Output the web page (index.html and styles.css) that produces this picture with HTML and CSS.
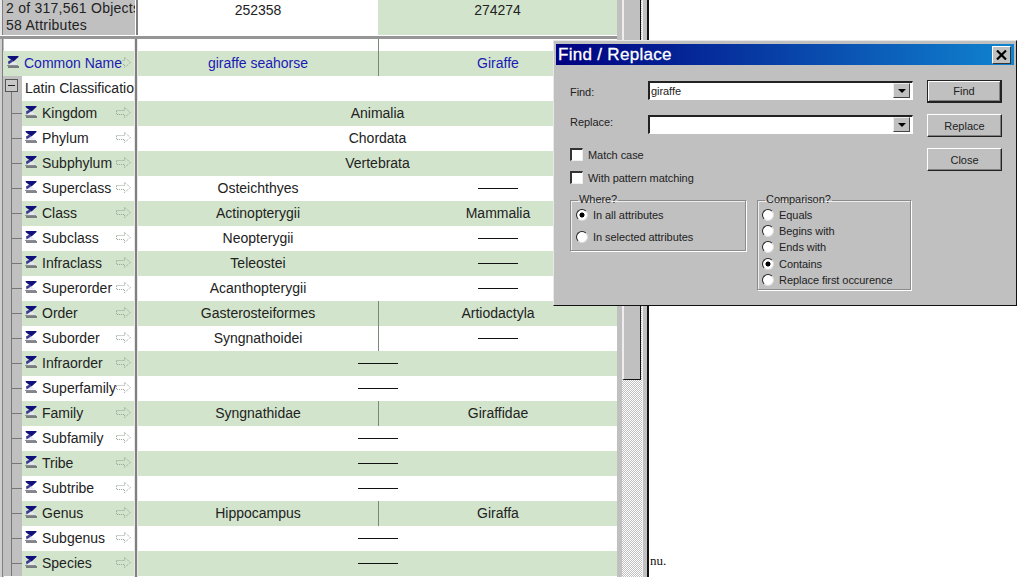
FILE: index.html
```html
<!DOCTYPE html>
<html lang="en">
<head>
<meta charset="utf-8">
<title>Find / Replace</title>
<link rel="stylesheet" href="styles.css">
</head>
<body>
<svg class="defs" width="0" height="0" aria-hidden="true">
  <symbol id="sum" viewBox="0 0 12 12">
    <path d="M0.5 0H11.5V1L6.5 5.5L1 1.5Z" fill="#10107a"/>
    <path d="M5 5.5L1 8.5H11L7.5 6.5Z" fill="#e8e8f4"/>
    <path d="M1 5.5L4.5 3.5L6 5.5L1.5 8.5Z" fill="#3a3a90"/>
    <path d="M0 9.5H11" stroke="#8c8c98" stroke-width="1"/>
    <path d="M1 11H12" stroke="#50505a" stroke-width="1.4"/>
  </symbol>
  <symbol id="arrow" viewBox="0 0 17 13">
    <path d="M1.5 4.5H9.5V1.5L15.5 6.5L9.5 11.5V8.5H1.5Z" fill="none" stroke="#97a397" stroke-width="1" stroke-dasharray="1 1"/>
  </symbol>
</svg>

<main class="app">
  <div class="pane">
    <header class="head">
      <div class="head-info">2 of 317,561 Objects<br>58 Attributes</div>
      <div class="head-split"></div>
      <div class="head-cols"><div class="hc">252358</div><div class="hc hc-g">274274</div></div>
    </header>
    <div class="gap"></div>

    <div class="row r-top"><div class="lab"></div><div class="split"></div><div class="vals"><div class="v v-l"></div><div class="v"></div></div></div>

    <div class="row g"><div class="lab lab-root"><svg class="sum"><use href="#sum"/></svg><div class="stack"><svg class="arr"><use href="#arrow"/></svg><span class="name link">Common Name</span></div></div><div class="split"></div><div class="vals"><div class="v v-l link">giraffe seahorse</div><div class="v link">Giraffe</div></div></div>

    <div class="row"><div class="lab"><div class="gut gut-min"><span class="minus"></span></div><span class="name name-latin">Latin Classification</span></div><div class="split"></div><div class="vals"></div></div>

    <div class="row g"><div class="lab"><div class="gut"></div><svg class="sum"><use href="#sum"/></svg><div class="stack"><svg class="arr"><use href="#arrow"/></svg><span class="name">Kingdom</span></div></div><div class="split"></div><div class="vals"><div class="v">Animalia</div></div></div>
    <div class="row"><div class="lab"><div class="gut"></div><svg class="sum"><use href="#sum"/></svg><div class="stack"><svg class="arr"><use href="#arrow"/></svg><span class="name">Phylum</span></div></div><div class="split"></div><div class="vals"><div class="v">Chordata</div></div></div>
    <div class="row g"><div class="lab"><div class="gut"></div><svg class="sum"><use href="#sum"/></svg><div class="stack"><svg class="arr"><use href="#arrow"/></svg><span class="name">Subphylum</span></div></div><div class="split"></div><div class="vals"><div class="v">Vertebrata</div></div></div>
    <div class="row"><div class="lab"><div class="gut"></div><svg class="sum"><use href="#sum"/></svg><div class="stack"><svg class="arr"><use href="#arrow"/></svg><span class="name">Superclass</span></div></div><div class="split"></div><div class="vals"><div class="v v-n">Osteichthyes</div><div class="v"><i class="dash"></i></div></div></div>
    <div class="row g"><div class="lab"><div class="gut"></div><svg class="sum"><use href="#sum"/></svg><div class="stack"><svg class="arr"><use href="#arrow"/></svg><span class="name">Class</span></div></div><div class="split"></div><div class="vals"><div class="v v-n">Actinopterygii</div><div class="v">Mammalia</div></div></div>
    <div class="row"><div class="lab"><div class="gut"></div><svg class="sum"><use href="#sum"/></svg><div class="stack"><svg class="arr"><use href="#arrow"/></svg><span class="name">Subclass</span></div></div><div class="split"></div><div class="vals"><div class="v v-n">Neopterygii</div><div class="v"><i class="dash"></i></div></div></div>
    <div class="row g"><div class="lab"><div class="gut"></div><svg class="sum"><use href="#sum"/></svg><div class="stack"><svg class="arr"><use href="#arrow"/></svg><span class="name">Infraclass</span></div></div><div class="split"></div><div class="vals"><div class="v v-n">Teleostei</div><div class="v"><i class="dash"></i></div></div></div>
    <div class="row"><div class="lab"><div class="gut"></div><svg class="sum"><use href="#sum"/></svg><div class="stack"><svg class="arr"><use href="#arrow"/></svg><span class="name">Superorder</span></div></div><div class="split"></div><div class="vals"><div class="v v-n">Acanthopterygii</div><div class="v"><i class="dash"></i></div></div></div>
    <div class="row g"><div class="lab"><div class="gut"></div><svg class="sum"><use href="#sum"/></svg><div class="stack"><svg class="arr"><use href="#arrow"/></svg><span class="name">Order</span></div></div><div class="split"></div><div class="vals"><div class="v v-l">Gasterosteiformes</div><div class="v">Artiodactyla</div></div></div>
    <div class="row"><div class="lab"><div class="gut"></div><svg class="sum"><use href="#sum"/></svg><div class="stack"><svg class="arr"><use href="#arrow"/></svg><span class="name">Suborder</span></div></div><div class="split"></div><div class="vals"><div class="v v-l">Syngnathoidei</div><div class="v"><i class="dash"></i></div></div></div>
    <div class="row g"><div class="lab"><div class="gut"></div><svg class="sum"><use href="#sum"/></svg><div class="stack"><svg class="arr"><use href="#arrow"/></svg><span class="name">Infraorder</span></div></div><div class="split"></div><div class="vals"><div class="v"><i class="dash"></i></div></div></div>
    <div class="row"><div class="lab"><div class="gut"></div><svg class="sum"><use href="#sum"/></svg><div class="stack"><svg class="arr"><use href="#arrow"/></svg><span class="name">Superfamily</span></div></div><div class="split"></div><div class="vals"><div class="v"><i class="dash"></i></div></div></div>
    <div class="row g"><div class="lab"><div class="gut"></div><svg class="sum"><use href="#sum"/></svg><div class="stack"><svg class="arr"><use href="#arrow"/></svg><span class="name">Family</span></div></div><div class="split"></div><div class="vals"><div class="v v-l">Syngnathidae</div><div class="v">Giraffidae</div></div></div>
    <div class="row"><div class="lab"><div class="gut"></div><svg class="sum"><use href="#sum"/></svg><div class="stack"><svg class="arr"><use href="#arrow"/></svg><span class="name">Subfamily</span></div></div><div class="split"></div><div class="vals"><div class="v"><i class="dash"></i></div></div></div>
    <div class="row g"><div class="lab"><div class="gut"></div><svg class="sum"><use href="#sum"/></svg><div class="stack"><svg class="arr"><use href="#arrow"/></svg><span class="name">Tribe</span></div></div><div class="split"></div><div class="vals"><div class="v"><i class="dash"></i></div></div></div>
    <div class="row"><div class="lab"><div class="gut"></div><svg class="sum"><use href="#sum"/></svg><div class="stack"><svg class="arr"><use href="#arrow"/></svg><span class="name">Subtribe</span></div></div><div class="split"></div><div class="vals"><div class="v"><i class="dash"></i></div></div></div>
    <div class="row g"><div class="lab"><div class="gut"></div><svg class="sum"><use href="#sum"/></svg><div class="stack"><svg class="arr"><use href="#arrow"/></svg><span class="name">Genus</span></div></div><div class="split"></div><div class="vals"><div class="v v-l">Hippocampus</div><div class="v">Giraffa</div></div></div>
    <div class="row"><div class="lab"><div class="gut"></div><svg class="sum"><use href="#sum"/></svg><div class="stack"><svg class="arr"><use href="#arrow"/></svg><span class="name">Subgenus</span></div></div><div class="split"></div><div class="vals"><div class="v"><i class="dash"></i></div></div></div>
    <div class="row g"><div class="lab"><div class="gut"></div><svg class="sum"><use href="#sum"/></svg><div class="stack"><svg class="arr"><use href="#arrow"/></svg><span class="name">Species</span></div></div><div class="split"></div><div class="vals"><div class="v"><i class="dash"></i></div></div></div>
    <div class="row"><div class="lab"></div><div class="split"></div><div class="vals"></div></div>
  </div>

  <div class="vscroll">
    <div class="vs-gutter"></div>
    <div class="vs-track"><div class="vs-thumb"></div></div>
  </div>
</main>
<p class="stray">nu.</p>

<section class="dialog" aria-label="Find / Replace">
  <div class="titlebar">
    <span class="title">Find / Replace</span>
    <button class="x" type="button" aria-label="Close"><svg width="11" height="10" viewBox="0 0 11 10"><path d="M1 0.5L10 9.5M10 0.5L1 9.5" stroke="#000" stroke-width="2.2"/></svg></button>
  </div>
  <div class="dlg-body">
    <div class="form">
      <div class="field"><span>Find:</span><div class="combo"><span class="combo-val">giraffe</span><span class="drop"></span></div></div>
      <div class="field f2"><span>Replace:</span><div class="combo"><span class="combo-val"></span><span class="drop"></span></div></div>
      <label class="chk c1"><input type="checkbox"><span>Match case</span></label>
      <label class="chk c2"><input type="checkbox"><span>With pattern matching</span></label>
      <div class="groups">
        <fieldset class="grp grp-where">
          <legend>Where?</legend>
          <label class="rad"><input type="radio" name="w" checked><span>In all attributes</span></label>
          <label class="rad rad-far"><input type="radio" name="w"><span>In selected attributes</span></label>
        </fieldset>
        <fieldset class="grp grp-cmp">
          <legend>Comparison?</legend>
          <label class="rad"><input type="radio" name="c"><span>Equals</span></label>
          <label class="rad"><input type="radio" name="c"><span>Begins with</span></label>
          <label class="rad"><input type="radio" name="c"><span>Ends with</span></label>
          <label class="rad"><input type="radio" name="c" checked><span>Contains</span></label>
          <label class="rad"><input type="radio" name="c"><span>Replace first occurence</span></label>
        </fieldset>
      </div>
    </div>
    <div class="btns">
      <button class="btn btn-def" type="button">Find</button>
      <button class="btn" type="button">Replace</button>
      <button class="btn" type="button">Close</button>
    </div>
  </div>
</section>
</body>
</html>
```
FILE: styles.css
```css
* { box-sizing: border-box; }
html, body { margin: 0; height: 577px; overflow: hidden; background: #fff; }
body { display: flex; font-family: "Liberation Sans", Arial, sans-serif; color: #222; position: relative; }
.defs { position: absolute; }

.app { width: 649px; height: 577px; flex: none; display: flex; overflow: hidden; background: #c0c0c0; border-right: 2px solid #111; }
.pane { width: 617px; flex: none; display: flex; flex-direction: column; font-size: 14px; }

.head { height: 36px; flex: none; display: flex; border-bottom: 1px solid #fff; }
.head-info { width: 134px; margin-left: 2px; padding-left: 3px; border-left: 1px solid #808080; border-right: 1px solid #fff; background: #c0c0c0; line-height: 17px; letter-spacing: .25px; white-space: nowrap; overflow: hidden; box-shadow: -2px 0 0 #e8e8e8; }
.head-split { width: 2px; background: #808080; }
.head-cols { width: 479px; display: grid; grid-template-columns: 240px 239px; }
.hc { background: #fff; text-align: center; line-height: 21px; }
.hc-g { background: #d2e4cc; }
.gap { height: 3px; flex: none; background: #969696; }

.row { height: 25px; flex: none; display: flex; background: #fff; }
.row.g { background: #d2e4cc; }
.row.r-top { height: 12px; }

.lab { width: 132px; margin-left: 2px; padding-left: 1px; flex: none; display: flex; align-items: center; overflow: hidden; border-left: 1px solid #808080; box-shadow: -2px 0 0 #d0d0d0; background: linear-gradient(#c0c0c0, #c0c0c0) 0 0 / 1px 100% no-repeat; }
.lab-root { padding-left: 4px; background: none; }
.split { width: 4px; flex: none; border-left: 1px solid #e8e8e8; border-right: 1px solid #e8e8e8; background: #808080; }
.vals { width: 479px; flex: none; display: flex; }
.v { flex: 1 1 0; min-width: 0; padding-bottom: 2px; display: flex; align-items: center; justify-content: center; white-space: nowrap; }
.v-l { flex: 0 0 241px; border-right: 1px solid #7a8a78; }
.v-n { flex: 0 0 241px; padding-right: 1px; }
.link { color: #1a1ab4; }
.dash { display: block; width: 40px; height: 1px; margin-top: 2px; background: #111; }

.gut { width: 18px; height: 25px; flex: none; background:
  linear-gradient(#777, #777) 7px 0 / 1px 100% no-repeat,
  linear-gradient(#777, #777) 7px 12px / 11px 1px no-repeat,
  #c0c0c0; }
.gut-min { background: linear-gradient(#777, #777) 7px 16px / 1px 9px no-repeat, #c0c0c0; display: flex; padding: 3px 0 0 1px; }
.minus { width: 13px; height: 13px; border: 1px solid #555; background: linear-gradient(#222, #222) 2px 5px / 7px 1px no-repeat, #c8c8c8; }
.sum { width: 12px; height: 12px; flex: none; margin: 0 0 1px 3px; position: relative; top: -1px; }
.lab-root .sum { margin-left: 0; }
.stack { flex: 1; min-width: 0; height: 25px; padding-bottom: 2px; display: grid; align-items: center; }
.stack > * { grid-area: 1 / 1; }
.arr { width: 17px; height: 13px; justify-self: end; margin-right: 2px; }
.name { justify-self: start; margin-left: 5px; white-space: nowrap; position: relative; }
.row .name { background: #fff; }
.row.g .name { background: #d2e4cc; }
.name-latin { margin-left: 3px; margin-bottom: 2px; }

.vscroll { width: 26px; flex: none; display: flex; border-right: 1px solid #f0f0f0; }
.vs-gutter { width: 5px; background: #c0c0c0; }
.vs-track { width: 20px; background: repeating-conic-gradient(#c0c0c0 0 25%, #fff 0 50%) 0 0 / 2px 2px; }
.vs-thumb { width: 19px; height: 380px; background: #c0c0c0; border-left: 2px solid #eee; border-right: 1px solid #111; border-bottom: 1px solid #111; }

.stray { margin: 553px 0 0; padding-left: 1px; font: 13px/16px "Liberation Serif", serif; color: #111; }

.dialog { position: absolute; left: 553px; top: 40px; width: 464px; height: 266px; background: #c0c0c0; border: 1px solid; border-color: #e8e8e8 #111 #111 #e8e8e8; padding: 3px 2px 0 2px; font-size: 11px; letter-spacing: -.06px; }
.titlebar { height: 21px; display: flex; align-items: center; justify-content: space-between; background: linear-gradient(90deg, #000080, #1084d0); padding: 0 3px 0 2px; }
.title { color: #fff; font-size: 17px; letter-spacing: .3px; -webkit-text-stroke: .3px #fff; }
.x { width: 19px; height: 18px; padding: 0; display: flex; align-items: center; justify-content: center; background: #c0c0c0; border: 1px solid; border-color: #fff #333 #333 #fff; }

.dlg-body { display: flex; padding: 0 0 0 14px; }
.form { width: 343px; }
.field { display: grid; grid-template-columns: 78px 265px; align-items: center; margin-top: 16px; height: 19px; }
.field.f2 { margin-top: 15px; }
.field > span { position: relative; top: 1px; }
.field.f2 > span { top: -3px; }
.combo { height: 19px; padding: 0 2px 1px 1px; display: flex; align-items: center; justify-content: space-between; background: #fff; border: 1px solid; border-color: #222 #fff #fff #222; border-left-width: 2px; border-top-width: 2px; }
.drop { width: 17px; height: 15px; background: #c0c0c0; border: 1px solid; border-color: #eee #444 #444 #eee; display: flex; align-items: center; justify-content: center; }
.drop::after { content: ""; border: 4px solid transparent; border-top: 4px solid #000; border-bottom: 0; }

.chk { display: flex; align-items: center; gap: 5px; height: 13px; }
.c1 { margin-top: 14px; }
.c2 { margin-top: 10px; }
.chk input { appearance: none; margin: 0; width: 13px; height: 13px; background: #fff; border: 1px solid; border-color: #333 #eee #eee #333; border-left-width: 2px; border-top-width: 2px; }

.groups { display: flex; gap: 11px; margin-top: 9px; align-items: flex-start; }
.grp { margin: 0; padding: 0 0 0 5px; border: 1px solid #8c8c8c; box-shadow: 1px 1px 0 #fff, inset 1px 1px 0 #eee; min-width: 0; }
.grp legend { padding: 0 1px; margin-left: 2px; height: 14px; line-height: 12px; }
.grp-where { width: 176px; height: 58px; }
.grp-cmp { width: 154px; height: 97px; padding-left: 4px; }
.grp-cmp legend { margin-left: 3px; }
.rad { display: flex; align-items: center; gap: 5px; height: 16.2px; }
.rad-far { margin-top: 6px; }
.rad input { appearance: none; margin: 0; width: 12px; height: 12px; border-radius: 50%; background: #fff; border: 1px solid; border-color: #222 #ddd #ddd #222; }
.rad input:checked { background: radial-gradient(circle, #000 0 2.2px, #fff 2.8px); }

.btns { width: 75px; margin-left: 14px; display: flex; flex-direction: column; gap: 11px; padding-top: 15px; }
.btn { height: 23px; padding: 0; background: #c0c0c0; font: 11px "Liberation Sans", Arial, sans-serif; color: #222; border: 1px solid; border-color: #fff #222 #222 #fff; box-shadow: inset -1px -1px 0 #808080; }
.btn-def { border: 1px solid #222; border-right-width: 2px; border-bottom-width: 2px; box-shadow: inset 1px 1px 0 #fff, inset -1px -1px 0 #808080; }
```
